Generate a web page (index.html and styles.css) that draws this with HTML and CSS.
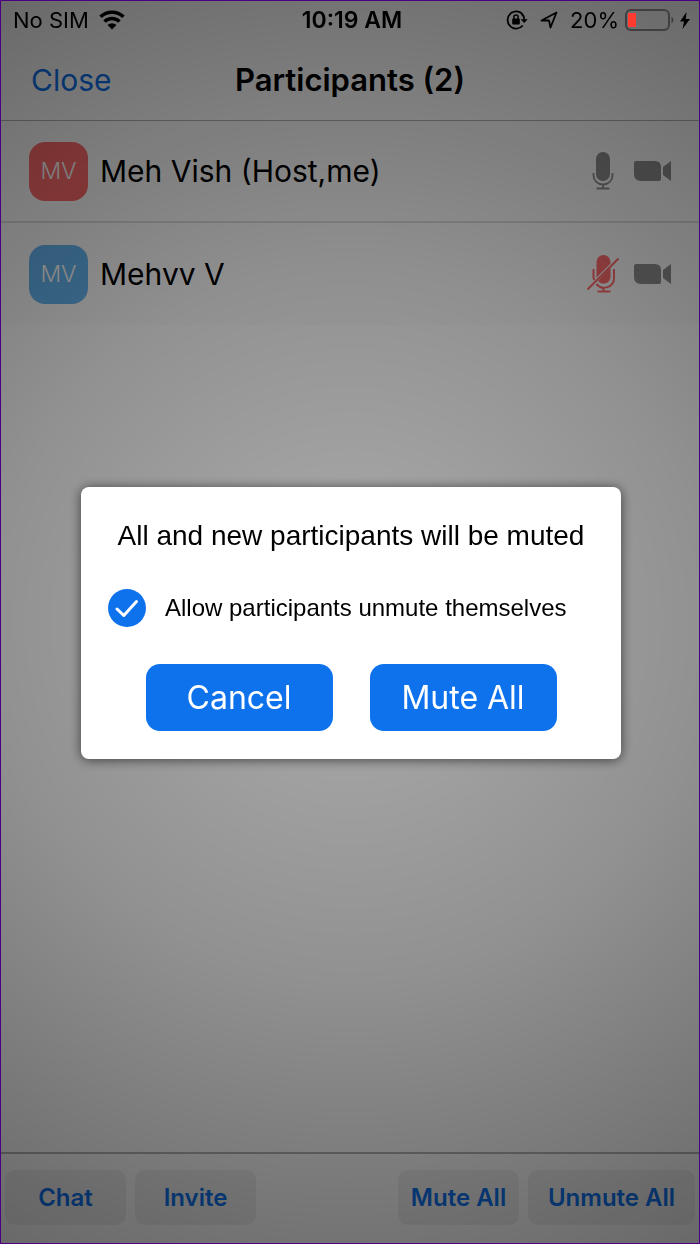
FILE: index.html
```
<!DOCTYPE html>
<html lang="en">
<head>
    <meta charset="utf-8">
    <title>Participants</title>
    <meta name="viewport" content="width=device-width, initial-scale=1">
    <link rel="stylesheet" href="styles.css">
</head>
<body>
    <!-- shared icon shapes -->
    <svg class="sprite" width="0" height="0">
        <symbol id="camera" viewBox="0 0 38 22">
            <path d="M2 1h19q6 0 6 6v12q0 2-2 2H7q-7 0-7-7V3q0-2 2-2z"/>
            <path d="M29 7l8-6v20l-8-6z"/>
        </symbol>
    </svg>

    <div class="app">
        <div class="status-bar">
            <div class="status-left">
                <span>No SIM</span>
                <svg width="28" height="20" viewBox="0 0 28 20">
                    <path d="M2.500 6.800a16.500 16.500 0 0 1 23 0M6.500 11.500a10.800 10.800 0 0 1 15 0" fill="none" stroke="#000" stroke-width="3.500"/>
                    <path d="M9.500 15a6.500 6.500 0 0 1 9 0L14 19.500z"/>
                </svg>
            </div>
            <div class="status-time">10:19 AM</div>
            <div class="status-right">
                <svg width="22" height="20" viewBox="0 0 22 20">
                    <path d="M17 4.800A8.600 8.600 0 1 0 16.800 15.500M15.500 3.500a8.600 8.600 0 0 1 2.800 6" fill="none" stroke="#000" stroke-width="1.800"/>
                    <path d="M14.500 9.300h7.300L18.200 13z"/>
                    <rect x="6.200" y="8.500" width="7.600" height="6" rx="1"/>
                    <path d="M7.900 9V7a2.100 2.100 0 0 1 4.200 0v2" fill="none" stroke="#000" stroke-width="1.500"/>
                </svg>
                <svg class="location" width="18" height="18" viewBox="0 0 18 18">
                    <path d="M1.500 9.500L16.500 1.500L10.500 16.500L9 9.500z" fill="none" stroke="#000" stroke-width="1.800" stroke-linejoin="round"/>
                </svg>
                <span class="percent">20%</span>
                <svg width="49" height="22" viewBox="0 0 49 22">
                    <rect x="1" y="1" width="43" height="20" rx="5" fill="none" stroke="#3f3f3f" stroke-width="2"/>
                    <rect x="3" y="4" width="8" height="14" rx="1" fill="#ff3b30"/>
                    <path d="M46.500 7.500q2 1 2 3.500t-2 3.500z" fill="#3f3f3f"/>
                </svg>
                <svg class="bolt" width="12" height="17" viewBox="0 0 12 17">
                    <path d="M7.500 0L1 9.500h4L3.500 17L11 7H6.800z"/>
                </svg>
            </div>
        </div>

        <header class="nav-bar">
            <a class="close" href="#">Close</a>
            <h1>Participants (2)</h1>
        </header>

        <ul class="participants">
            <li>
                <span class="avatar red">MV</span>
                <span class="name">Meh Vish (Host,me)</span>
                <svg class="mic" width="32" height="40" viewBox="0 0 32 40">
                    <rect x="9" y="1" width="14" height="29" rx="7"/>
                    <path d="M6.500 22v2.500a9.500 9 0 0 0 19 0V22M16 33v5M9.500 37.500h13" fill="none" stroke="#8e8e8e" stroke-width="1.800"/>
                </svg>
                <svg class="cam" width="38" height="22"><use href="#camera"/></svg>
            </li>
            <li>
                <span class="avatar blue">MV</span>
                <span class="name">Mehvv V</span>
                <svg class="mic muted" width="32" height="40" viewBox="0 0 32 40">
                    <path d="M9.500 8a7 7 0 0 1 14 0v1.500L9.500 23.500zM23.500 13v10a7 7 0 0 1-12.500 4z"/>
                    <path d="M6.500 15v9l1 2M9.500 30a9.800 9.500 0 0 0 17.500-6v-9M16.500 33v5M10.500 37.500h13M.5 35.500L31.500 4.500" fill="none" stroke="#ff6b6b" stroke-width="2"/>
                </svg>
                <svg class="cam" width="38" height="22"><use href="#camera"/></svg>
            </li>
        </ul>

        <footer class="toolbar">
            <button>Chat</button>
            <button>Invite</button>
            <button class="push">Mute All</button>
            <button class="wide">Unmute All</button>
        </footer>
    </div>

    <div class="overlay">
        <div class="dialog" role="dialog" aria-labelledby="dialog-title">
            <h2 id="dialog-title">All and new participants will be muted</h2>
            <label class="option">
                <span class="check">
                    <input type="checkbox" checked>
                    <svg width="38" height="38" viewBox="0 0 38 38">
                        <path d="M9 20L15.800 26.500L28.500 12.500" fill="none" stroke="#fff" stroke-width="3" stroke-linecap="round" stroke-linejoin="round"/>
                    </svg>
                </span>
                <span>Allow participants unmute themselves</span>
            </label>
            <div class="actions">
                <button>Cancel</button>
                <button>Mute All</button>
            </div>
        </div>
    </div>
</body>
</html>
```

FILE: styles.css
```
* {
    box-sizing: border-box;
}
body {
    margin: 0;
    font-family: Inter, "Liberation Sans", sans-serif;
    color: #000;
}
h1, h2, ul {
    margin: 0;
    padding: 0;
}
button {
    border: 0;
    font-family: inherit;
    padding: 0;
}
svg {
    display: block;
    flex: none;
}
.sprite {
    position: absolute;
}
.app {
    display: flex;
    flex-direction: column;
    min-height: 100vh;
    background-color: #fff;
    border: 1px solid #4b0082;
}

/* status bar, stays above the dimmed page */
.status-bar {
    position: relative;
    z-index: 2;
    display: grid;
    grid-template-columns: 1fr auto 1fr;
    align-items: center;
    height: 38px;
    padding: 0 8px 0 12px;
    font-size: 22px;
}
.status-left, .status-right {
    display: flex;
    align-items: center;
}
.status-left {
    gap: 9px;
}
.status-time {
    font-size: 23px;
    font-weight: 600;
}
.status-right {
    justify-content: flex-end;
}
.location {
    margin: 0 12px 0 12px;
}
.percent {
    margin-right: 6px;
}
.bolt {
    margin-left: 5px;
}

.nav-bar {
    display: grid;
    grid-template-columns: 1fr auto 1fr;
    align-items: center;
    height: 82px;
    padding: 0 30px;
    border-bottom: 1px solid #b2b2b2;
}
.nav-bar h1 {
    font-size: 31px;
    font-weight: 600;
}
.close {
    color: #0e72ed;
    font-size: 30px;
    text-decoration: none;
}

/* the list fills whatever the bars leave */
.participants {
    flex: 1;
    list-style: none;
}
.participants li {
    display: flex;
    align-items: center;
    height: 102px;
    padding: 0 27px 0 28px;
    background-color: #fcfcfc;
}
.participants li:first-child {
    border-bottom: 2px solid #dcdcdc;
}
.avatar {
    width: 59px;
    height: 59px;
    border-radius: 16px;
    color: #fff;
    font-size: 23px;
    font-weight: 300;
    line-height: 59px;
    text-align: center;
}
.red {
    background-color: #ff6b6b;
}
.blue {
    background-color: #66b5f0;
}
.name {
    flex: 1;
    margin-left: 12px;
    font-size: 30px;
}
.mic, .cam {
    fill: #8e8e8e;
}
.mic {
    margin-right: 15px;
}
.muted {
    fill: #ff6b6b;
}

.toolbar {
    display: flex;
    gap: 9px;
    height: 91px;
    padding: 16px 4px 0;
    border-top: 2px solid #b6b6b6;
}
.toolbar button {
    width: 121px;
    height: 55px;
    border-radius: 10px;
    background-color: #f0f0f0;
    color: #0e72ed;
    font-size: 24px;
    font-weight: 600;
}
.toolbar .push {
    margin-left: auto;
}
.toolbar .wide {
    width: 167px;
}

.overlay {
    position: fixed;
    inset: 1px;
    z-index: 1;
    display: flex;
    align-items: center;
    justify-content: center;
    padding: 2px 0 0 2px;
    background: radial-gradient(circle farthest-corner, rgba(0, 0, 0, 0.32), rgba(0, 0, 0, 0.43) 50%, rgba(0, 0, 0, 0.59));
}
.dialog {
    width: 540px;
    max-width: 90%;
    padding: 33px 27px 28px;
    border-radius: 8px;
    background-color: #fff;
    box-shadow: 0 1px 12px rgba(0, 0, 0, 0.6);
    font-family: "Liberation Sans", Arial, sans-serif;
}
.dialog h2 {
    font-size: 28px;
    font-weight: normal;
    line-height: 32px;
    text-align: center;
}
.option {
    display: flex;
    align-items: center;
    gap: 19px;
    margin: 37px 0;
    font-size: 24px;
}
.check {
    display: grid;
}
.check input, .check svg {
    grid-area: 1 / 1;
}
.check input {
    appearance: none;
    width: 38px;
    height: 38px;
    margin: 0;
    border-radius: 50%;
    background-color: #0e72ed;
}
.actions {
    display: flex;
    justify-content: center;
    gap: 37px;
}
.actions button {
    width: 187px;
    height: 67px;
    border-radius: 14px;
    background-color: #0e72ed;
    color: #fff;
    font-family: Inter, sans-serif;
    font-size: 32px;
}
```
